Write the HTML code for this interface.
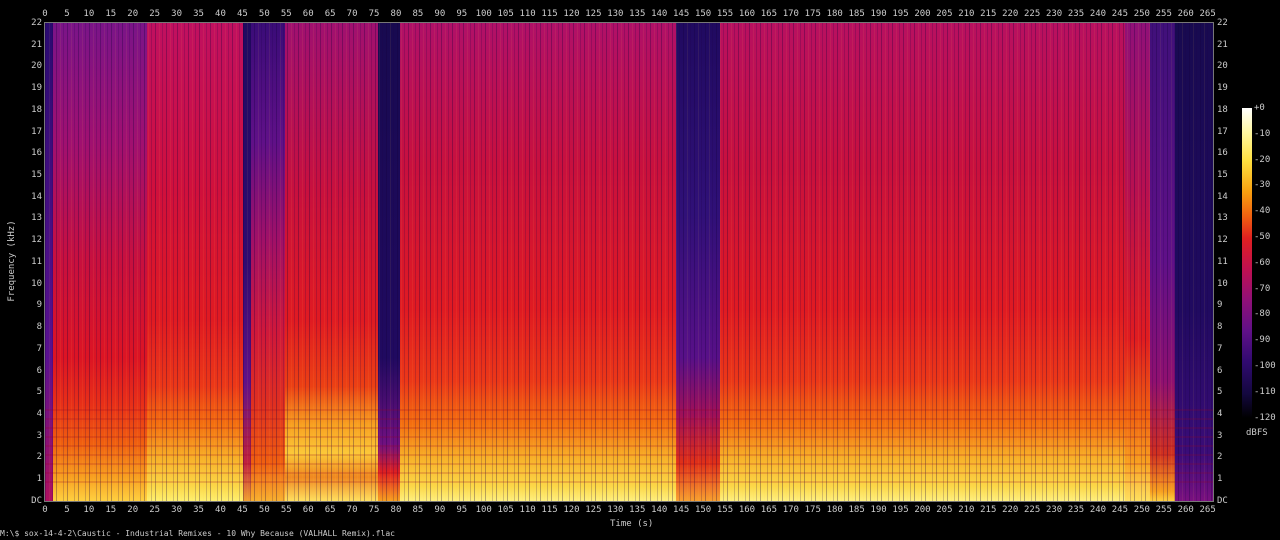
<!DOCTYPE html>
<html><head><meta charset="utf-8"><style>
body{margin:0;background:#000;width:1280px;height:540px;overflow:hidden;position:relative;font-family:"DejaVu Sans Mono","Liberation Mono",monospace;font-size:9px;color:#ccc}
#plot{position:absolute;left:45px;top:23px;width:1168px;height:478px;overflow:hidden;background:#c01050}
.r{position:absolute;top:0;height:478px}
#tex{position:absolute;left:0;top:0;width:100%;height:100%;
background:repeating-linear-gradient(90deg,rgba(20,0,60,.3) 0 1px,transparent 1px 4px,rgba(255,200,80,.08) 4px 5px,transparent 5px 7px,rgba(30,0,70,.2) 7px 8px,transparent 8px 11px);}
#tex2{position:absolute;left:0;top:0;width:100%;height:100%;
background:repeating-linear-gradient(0deg,rgba(150,0,30,.18) 0 2px,transparent 2px 9px);clip-path:inset(80% 0 3% 0)}
.ax{position:absolute;border:1px solid #777}
.tr{position:absolute;display:flex}
.tr span{width:21.95px;text-align:center;flex:none}
.fc{position:absolute;display:flex;flex-direction:column}
.fc span{height:21.73px;line-height:10px;flex:none}
</style></head><body>
<div id="plot">
<div class="r" style="left:0;width:102px;background:linear-gradient(180deg,#7a1488 0%,#a01070 25%,#c8103e 50%,#dc1424 70%,#e83018 80%,#f06010 88%,#f8a020 95%,#ffd040 100%)"></div>
<div class="r" style="left:0;width:8px;background:linear-gradient(180deg,#2a0a70,#5a1090 70%,#b01060)"></div>
<div class="r" style="left:102px;width:96px;background:linear-gradient(180deg,#c01060 0%,#d0103c 35%,#e01a22 62%,#ec3818 76%,#f47010 84%,#f8b028 91%,#fcd848 97%,#fff070 100%)"></div>
<div class="r" style="left:198px;width:8px;background:linear-gradient(180deg,#200a60 0%,#300a70 50%,#601088 75%,#c02040 92%,#f0a030 100%)"></div>
<div class="r" style="left:206px;width:34px;background:linear-gradient(180deg,#3a0c78 0%,#601088 25%,#a01068 45%,#d0183a 65%,#e03020 80%,#f06010 92%,#f8b030 100%)"></div>
<div class="r" style="left:240px;width:93px;background:linear-gradient(180deg,#a01070 0%,#c8103e 35%,#e01a22 62%,#ec4014 76%,#f8a020 84%,#fcc838 90%,#f08820 95%,#ffe060 100%)"></div>
<div class="r" style="left:333px;width:22px;background:linear-gradient(180deg,#180a50 0%,#200a60 70%,#701080 88%,#e02020 94%,#f8a020 100%)"></div>
<div class="r" style="left:355px;width:276px;background:linear-gradient(180deg,#b01068 0%,#c8103e 30%,#e01a22 60%,#ec3818 75%,#f47010 84%,#f8b028 91%,#fcd848 97%,#fff080 100%)"></div>
<div class="r" style="left:631px;width:44px;background:linear-gradient(180deg,#200a60 0%,#301078 40%,#581088 70%,#a01058 82%,#e03018 92%,#f8a030 100%)"></div>
<div class="r" style="left:675px;width:430px;background:linear-gradient(180deg,#b81060 0%,#c8103e 30%,#e01a22 60%,#ec3818 75%,#f47010 84%,#f8b028 91%,#fcd848 97%,#fff080 100%)"></div>
<div class="r" style="left:1080px;width:25px;background:linear-gradient(180deg,#901078 0%,#b81050 35%,#e01c20 66%,#f06010 82%,#f8a020 92%,#ffe060 100%)"></div>
<div class="r" style="left:1105px;width:25px;background:linear-gradient(180deg,#40107a 0%,#601088 50%,#901070 75%,#d03020 90%,#f8a020 98%,#ffd040 100%)"></div>
<div class="r" style="left:1130px;width:38px;background:linear-gradient(180deg,#180a50 0%,#200a60 60%,#3a0c78 90%,#7a1080 100%)"></div>
<div id="tex"></div><div id="tex2"></div>
</div>
<div class="ax" style="left:44px;top:22px;width:1168px;height:478px"></div>
<div class="tr" style="left:34px;top:9px"><span>0</span><span>5</span><span>10</span><span>15</span><span>20</span><span>25</span><span>30</span><span>35</span><span>40</span><span>45</span><span>50</span><span>55</span><span>60</span><span>65</span><span>70</span><span>75</span><span>80</span><span>85</span><span>90</span><span>95</span><span>100</span><span>105</span><span>110</span><span>115</span><span>120</span><span>125</span><span>130</span><span>135</span><span>140</span><span>145</span><span>150</span><span>155</span><span>160</span><span>165</span><span>170</span><span>175</span><span>180</span><span>185</span><span>190</span><span>195</span><span>200</span><span>205</span><span>210</span><span>215</span><span>220</span><span>225</span><span>230</span><span>235</span><span>240</span><span>245</span><span>250</span><span>255</span><span>260</span><span>265</span></div>
<div class="tr" style="left:34px;top:505px"><span>0</span><span>5</span><span>10</span><span>15</span><span>20</span><span>25</span><span>30</span><span>35</span><span>40</span><span>45</span><span>50</span><span>55</span><span>60</span><span>65</span><span>70</span><span>75</span><span>80</span><span>85</span><span>90</span><span>95</span><span>100</span><span>105</span><span>110</span><span>115</span><span>120</span><span>125</span><span>130</span><span>135</span><span>140</span><span>145</span><span>150</span><span>155</span><span>160</span><span>165</span><span>170</span><span>175</span><span>180</span><span>185</span><span>190</span><span>195</span><span>200</span><span>205</span><span>210</span><span>215</span><span>220</span><span>225</span><span>230</span><span>235</span><span>240</span><span>245</span><span>250</span><span>255</span><span>260</span><span>265</span></div>
<div class="fc" style="left:26px;top:18px;text-align:right;width:16px"><span>22</span><span>21</span><span>20</span><span>19</span><span>18</span><span>17</span><span>16</span><span>15</span><span>14</span><span>13</span><span>12</span><span>11</span><span>10</span><span>9</span><span>8</span><span>7</span><span>6</span><span>5</span><span>4</span><span>3</span><span>2</span><span>1</span><span>DC</span></div>
<div class="fc" style="left:1217px;top:18px"><span>22</span><span>21</span><span>20</span><span>19</span><span>18</span><span>17</span><span>16</span><span>15</span><span>14</span><span>13</span><span>12</span><span>11</span><span>10</span><span>9</span><span>8</span><span>7</span><span>6</span><span>5</span><span>4</span><span>3</span><span>2</span><span>1</span><span>DC</span></div>
<div style="position:absolute;left:-38px;top:256px;width:100px;text-align:center;white-space:nowrap;transform:rotate(-90deg)">Frequency (kHz)</div>
<div style="position:absolute;left:610px;top:519px">Time (s)</div>
<div style="position:absolute;left:1242px;top:108px;width:10px;height:310px;background:linear-gradient(180deg,#fff 0%,#fff8a0 8%,#ffe040 17%,#f8a010 27%,#f06010 35%,#e02020 42%,#c01050 52%,#901078 62%,#601088 72%,#300a70 82%,#140840 92%,#000 100%)"></div>
<div class="fc" style="left:1254px;top:103px"><span style="height:25.8px">+0</span><span style="height:25.8px">-10</span><span style="height:25.8px">-20</span><span style="height:25.8px">-30</span><span style="height:25.8px">-40</span><span style="height:25.8px">-50</span><span style="height:25.8px">-60</span><span style="height:25.8px">-70</span><span style="height:25.8px">-80</span><span style="height:25.8px">-90</span><span style="height:25.8px">-100</span><span style="height:25.8px">-110</span><span style="height:25.8px">-120</span></div>
<div style="position:absolute;left:1246px;top:428px">dBFS</div>
<div style="position:absolute;left:0;top:529px;white-space:pre;font-size:8px">M:\$ sox-14-4-2\Caustic - Industrial Remixes - 10 Why Because (VALHALL Remix).flac</div>
</body></html>
